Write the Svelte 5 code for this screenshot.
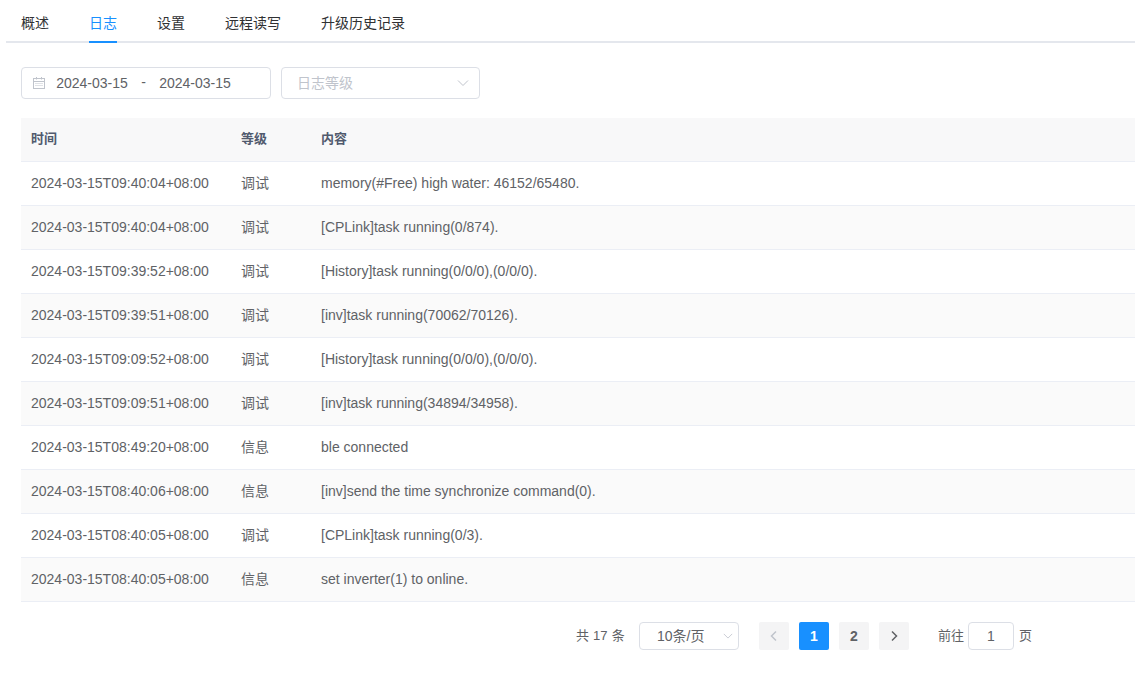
<script>
    const tabs = ['概述', '日志', '设置', '远程读写', '升级历史记录'];
    const rows = [
        ['2024-03-15T09:40:04+08:00', '调试', 'memory(#Free) high water: 46152/65480.'],
        ['2024-03-15T09:40:04+08:00', '调试', '[CPLink]task running(0/874).'],
        ['2024-03-15T09:39:52+08:00', '调试', '[History]task running(0/0/0),(0/0/0).'],
        ['2024-03-15T09:39:51+08:00', '调试', '[inv]task running(70062/70126).'],
        ['2024-03-15T09:09:52+08:00', '调试', '[History]task running(0/0/0),(0/0/0).'],
        ['2024-03-15T09:09:51+08:00', '调试', '[inv]task running(34894/34958).'],
        ['2024-03-15T08:49:20+08:00', '信息', 'ble connected'],
        ['2024-03-15T08:40:06+08:00', '信息', '[inv]send the time synchronize command(0).'],
        ['2024-03-15T08:40:05+08:00', '调试', '[CPLink]task running(0/3).'],
        ['2024-03-15T08:40:05+08:00', '信息', 'set inverter(1) to online.']
    ];
</script>

<div class="page">
    <nav class="tabs">
        {#each tabs as tab, i}
            <span class="tab" class:active={i === 1}>{tab}</span>
        {/each}
    </nav>

    <div class="content">
        <div class="filters">
            <div class="box range">
                <svg class="cal" width="14" height="14" viewBox="0 0 14 14" fill="none" stroke="#c0c4cc" stroke-width="1">
                    <rect x="1.500" y="2.500" width="11" height="10" />
                    <path d="M1.500 5.500h11M4.500 1v2.500M9.500 1v2.500" />
                    <path d="M3.500 7.500h7M3.500 9.500h7" stroke-dasharray="1 1" />
                </svg>
                <span class="date">2024-03-15</span>
                <span class="sep">-</span>
                <span class="date">2024-03-15</span>
            </div>
            <div class="box level">
                <span class="placeholder">日志等级</span>
                <svg width="12" height="12" viewBox="0 0 12 12" fill="none" stroke="#c0c4cc" stroke-width="1"><path d="M1 3.500l5 5 5-5" /></svg>
            </div>
        </div>

        <table>
            <colgroup><col class="c-time" /><col class="c-level" /><col /></colgroup>
            <thead>
                <tr><th>时间</th><th>等级</th><th>内容</th></tr>
            </thead>
            <tbody>
                {#each rows as row}
                    <tr>
                        <td>{row[0]}</td>
                        <td>{row[1]}</td>
                        <td>{row[2]}</td>
                    </tr>
                {/each}
            </tbody>
        </table>

        <div class="pager">
            <span class="total">共 17 条</span>
            <div class="box size">
                <span>10条/页</span>
                <svg width="10" height="10" viewBox="0 0 12 12" fill="none" stroke="#c0c4cc" stroke-width="1"><path d="M1 3.500l5 5 5-5" /></svg>
            </div>
            <div class="pages">
                <span class="pg"><svg width="10" height="12" viewBox="0 0 10 12" fill="none" stroke="#c0c4cc" stroke-width="1.500"><path d="M7 1.500L2.500 6 7 10.500" /></svg></span>
                <span class="pg on">1</span>
                <span class="pg">2</span>
                <span class="pg"><svg width="10" height="12" viewBox="0 0 10 12" fill="none" stroke="#606266" stroke-width="1.500"><path d="M3 1.500L7.500 6 3 10.500" /></svg></span>
            </div>
            <div class="jump">
                <span>前往</span>
                <div class="box goto">1</div>
                <span>页</span>
            </div>
        </div>
    </div>
</div>

<style>
    :global(body) { margin: 0; background: #fff; }
    .page { width: 1135px; height: 683px; overflow: hidden; font-family: "Liberation Sans", "Noto Sans CJK SC", sans-serif; font-size: 14px; line-height: 20px; color: #606266; }

    .tabs { display: flex; gap: 40px; height: 41px; margin-left: 6px; padding-left: 15px; border-bottom: 2px solid #e4e7ed; }
    .tab { height: 41px; padding-top: 13px; box-sizing: border-box; color: #303133; }
    .tab.active { color: #1890ff; border-bottom: 2px solid #1890ff; height: 43px; }

    .content { padding: 24px 0 0 21px; }
    .filters { display: flex; gap: 10px; margin-bottom: 19px; }
    .box { box-sizing: border-box; display: flex; align-items: center; border: 1px solid #dcdfe6; border-radius: 4px; background: #fff; }
    .range { width: 250px; height: 32px; padding-left: 10px; }
    .cal { margin-right: 4px; }
    .date { width: 84px; text-align: center; }
    .sep { width: 19px; text-align: center; margin-top: -2px; }
    .level { width: 199px; height: 32px; padding: 0 10px 0 15px; justify-content: space-between; }
    .placeholder { color: #c0c4cc; margin-top: -1px; }

    table { width: 1114px; border-collapse: collapse; table-layout: fixed; }
    .c-time { width: 210px; }
    .c-level { width: 80px; }
    th, td { height: 44px; padding: 0 10px; box-sizing: border-box; text-align: left; border-bottom: 1px solid #ebeef5; font-size: 14px; font-weight: normal; }
    th { height: 43px; font-size: 13px; font-weight: bold; background: #f8f8f9; color: #515a6e; }
    tbody tr:nth-child(even) td { background: #fafafa; }

    .pager { display: flex; align-items: center; height: 28px; margin: 20px 0 0 555px; font-size: 13px; }
    .total { width: 63px; word-spacing: 0.5px; }
    .size { width: 100px; height: 28px; padding: 0 5px 0 17px; justify-content: space-between; font-size: 14px; }
    .pages { display: flex; gap: 10px; margin-left: 20px; }
    .pg { display: flex; align-items: center; justify-content: center; width: 30px; height: 28px; border-radius: 2px; background: #f4f4f5; font-weight: bold; font-size: 14px; }
    .pg.on { background: #1890ff; color: #fff; }
    .jump { display: flex; align-items: center; margin-left: 29px; }
    .goto { width: 46px; height: 28px; margin: 0 5px 0 4px; justify-content: center; font-size: 14px; }
</style>
